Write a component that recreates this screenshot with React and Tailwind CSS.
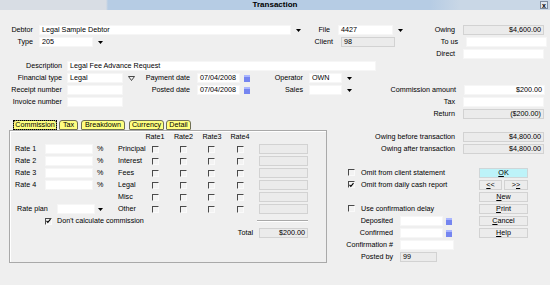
import React from "react";

const Field = ({ w, gray, right, children }) => (
  <div
    className={`${w} h-[10px] shrink-0 flex items-center px-[2px] border leading-none overflow-hidden whitespace-nowrap ${
      gray ? "bg-[#ebebeb] border-[#d2d2d2]" : "bg-white border-[#f6f6f6]"
    } ${right ? "justify-end" : ""}`}
  >
    {children}
  </div>
);

const Label = ({ w, pr = "", pl = "", left, children }) => (
  <div className={`${w} ${pr} ${pl} shrink-0 leading-none whitespace-nowrap ${left ? "text-left" : "text-right"}`}>
    {children}
  </div>
);

const Arrow = ({ ml = "ml-[3px]", hollow }) => (
  <div className={`${ml} w-[8px] h-[10px] shrink-0 flex items-center justify-center`}>
    {hollow ? (
      <svg width="7" height="5" viewBox="0 0 7 5">
        <path d="M0.5 0.5H6.5L3.5 4.5Z" fill="none" stroke="#333" strokeWidth="0.9" />
      </svg>
    ) : (
      <svg width="5" height="3" viewBox="0 0 5 3">
        <path d="M0 0H5L2.5 3Z" fill="#000" />
      </svg>
    )}
  </div>
);

const Check = ({ checked }) => (
  <div className="w-[7px] h-[7px] shrink-0 border-t border-l border-r border-b border-t-[#4a4a4a] border-l-[#4a4a4a] border-r-[#fafafa] border-b-[#fafafa] bg-[#f3f3f3] flex items-center justify-center">
    {checked && (
      <svg width="6" height="6" viewBox="0 0 6 6">
        <path d="M0.6 2.8L2.2 4.6L5.4 0.8" fill="none" stroke="#000" strokeWidth="1.3" />
      </svg>
    )}
  </div>
);

const Cal = ({ ml = "ml-[4px]" }) => (
  <div className={`${ml} w-[6px] h-[7px] shrink-0 bg-[#7585f0] border-t-2 border-[#aab6ff]`} />
);

const Btn = ({ w = "w-[49px]", cyan, children }) => (
  <div
    className={`${w} h-[10px] shrink-0 flex items-center justify-center border leading-none ${
      cyan ? "bg-[#bdf3f9] border-[#cfd6d8]" : "bg-[#ececec] border-[#d2d2d2]"
    }`}
  >
    {children}
  </div>
);

const Row = ({ children }) => <div className="h-[12px] flex items-center">{children}</div>;

const Tab = ({ w, ml, active, children }) => (
  <div
    className={`${w} ${ml} h-[10px] shrink-0 flex items-center justify-center bg-[#ffff80] border border-[#6f6f55] rounded-t-[3px] rounded-b-[1px] leading-none`}
  >
    <span className={active ? "outline outline-1 outline-dotted outline-black px-[1px]" : ""}>{children}</span>
  </div>
);

export default function App() {
  return (
    <div className="w-[550px] h-[285px] bg-[#efefef] text-black text-[7.2px] font-['Liberation_Sans',Arial,sans-serif] overflow-hidden flex flex-col">
      {/* Title bar */}
      <div className="h-[10px] shrink-0 flex items-center relative bg-[linear-gradient(to_right,#d8dde4_0px,#d8dde4_106px,#b6cce4_108px,#b6cce4_430px,#c9d7e6_460px,#c9d7e6_550px)]">
        <div className="flex-1 text-center font-bold text-[8px] leading-none">Transaction</div>
        <div className="absolute right-[2px] top-[1px] w-[8px] h-[8px] border border-[#7d8ca0] bg-[#dfe6ee] flex items-center justify-center text-[7px] font-bold leading-none">
          x
        </div>
      </div>

      {/* Top form */}
      <div className="mt-[14px] flex flex-col">
        <Row>
          <Label w="w-[39px]" pr="pr-[6px]">Debtor</Label>
          <Field w="w-[252px]">Legal Sample Debtor</Field>
          <Arrow />
          <Label w="w-[36px]" pr="pr-[8px]">File</Label>
          <Field w="w-[55px]">4427</Field>
          <Arrow />
          <Label w="w-[59px]" pr="pr-[8px]">Owing</Label>
          <Field w="w-[81px]" gray right>$4,600.00</Field>
        </Row>
        <Row>
          <Label w="w-[39px]" pr="pr-[6px]">Type</Label>
          <Field w="w-[54px]">205</Field>
          <Arrow />
          <Label w="w-[237px]" pr="pr-[8px]">Client</Label>
          <Field w="w-[54px]" gray>98</Field>
          <Label w="w-[71px]" pr="pr-[8px]">To us</Label>
          <Field w="w-[81px]" />
        </Row>
        <Row>
          <Label w="w-[463px]" pr="pr-[8px]">Direct</Label>
          <Field w="w-[81px]" />
        </Row>
        <Row>
          <Label w="w-[67px]" pr="pr-[5px]">Description</Label>
          <Field w="w-[309px]">Legal Fee Advance Request</Field>
        </Row>
        <Row>
          <Label w="w-[67px]" pr="pr-[5px]">Financial type</Label>
          <Field w="w-[56px]">Legal</Field>
          <Arrow ml="ml-[4px]" hollow />
          <Label w="w-[62px]" pr="pr-[7px]">Payment date</Label>
          <Field w="w-[43px]">07/04/2008</Field>
          <Cal />
          <Label w="w-[59px]" pr="pr-[6px]">Operator</Label>
          <Field w="w-[33px]">OWN</Field>
          <Arrow />
        </Row>
        <Row>
          <Label w="w-[67px]" pr="pr-[5px]">Receipt number</Label>
          <Field w="w-[56px]" />
          <Label w="w-[74px]" pr="pr-[7px]">Posted date</Label>
          <Field w="w-[43px]">07/04/2008</Field>
          <Cal />
          <Label w="w-[59px]" pr="pr-[6px]">Sales</Label>
          <Field w="w-[33px]" />
          <Arrow />
          <Label w="w-[111px]" pr="pr-[8px]">Commission amount</Label>
          <Field w="w-[81px]" right>$200.00</Field>
        </Row>
        <Row>
          <Label w="w-[67px]" pr="pr-[5px]">Invoice number</Label>
          <Field w="w-[56px]" />
          <Label w="w-[340px]" pr="pr-[8px]">Tax</Label>
          <Field w="w-[81px]" />
        </Row>
        <Row>
          <Label w="w-[463px]" pr="pr-[8px]">Return</Label>
          <Field w="w-[81px]" gray right>($200.00)</Field>
        </Row>
      </div>

      {/* Lower section */}
      <div className="flex">
        {/* Left tabbed panel */}
        <div className="ml-[9px] w-[318px] shrink-0 flex flex-col">
          <div className="h-[10px] flex pl-[4px]">
            <Tab w="w-[44px]" ml="ml-0" active>Commission</Tab>
            <Tab w="w-[19px]" ml="ml-[2px]">Tax</Tab>
            <Tab w="w-[44px]" ml="ml-[3px]">Breakdown</Tab>
            <Tab w="w-[35px]" ml="ml-[4px]">Currency</Tab>
            <Tab w="w-[25px]" ml="ml-[2px]">Detail</Tab>
          </div>
          <div className="h-[133px] border border-[#a9a9a9] shadow-[inset_1px_1px_0_#ffffff] flex flex-col">
            <Row>
              <div className="w-[131px] shrink-0" />
              <div className="w-[28px] shrink-0 text-center leading-none">Rate1</div>
              <div className="w-[29px] shrink-0 text-center leading-none">Rate2</div>
              <div className="w-[28px] shrink-0 text-center leading-none">Rate3</div>
              <div className="w-[28px] shrink-0 text-center leading-none">Rate4</div>
            </Row>
            {[
              ["Rate 1", "Principal"],
              ["Rate 2", "Interest"],
              ["Rate 3", "Fees"],
              ["Rate 4", "Legal"],
              [null, "Misc"],
              ["plan", "Other"],
            ].map(([rate, name]) => (
              <Row key={name}>
                {rate === "plan" ? (
                  <>
                    <Label w="w-[47px]" pl="pl-[7px]" left>Rate plan</Label>
                    <Field w="w-[38px]" />
                    <Arrow ml="ml-[1px]" />
                    <div className="w-[14px] shrink-0" />
                  </>
                ) : rate ? (
                  <>
                    <Label w="w-[35px]" pl="pl-[5px]" left>{rate}</Label>
                    <Field w="w-[48px]" />
                    <Label w="w-[25px]" pl="pl-[4px]" left>%</Label>
                  </>
                ) : (
                  <div className="w-[108px] shrink-0" />
                )}
                <Label w="w-[34px]" left>{name}</Label>
                <div className="w-[28px] shrink-0"><Check /></div>
                <div className="w-[28px] shrink-0"><Check /></div>
                <div className="w-[29px] shrink-0"><Check /></div>
                <div className="w-[22px] shrink-0"><Check /></div>
                <Field w="w-[49px]" gray />
              </Row>
            ))}
            <Row>
              <div className="w-[35px] shrink-0" />
              <Check checked />
              <div className="w-[205px] shrink-0 pl-[5px] leading-none whitespace-nowrap">Don't calculate commission</div>
              <div className="w-[51px] h-[2px] shrink-0 border-t border-b border-t-[#a9a9a9] border-b-white" />
            </Row>
            <Row>
              <Label w="w-[249px]" pr="pr-[6px]">Total</Label>
              <Field w="w-[49px]" gray right>$200.00</Field>
            </Row>
          </div>
        </div>

        {/* Right column */}
        <div className="w-[223px] shrink-0 pt-[11px] flex flex-col">
          <Row>
            <Label w="w-[136px]" pr="pr-[8px]">Owing before transaction</Label>
            <Field w="w-[81px]" gray right>$4,800.00</Field>
          </Row>
          <Row>
            <Label w="w-[136px]" pr="pr-[8px]">Owing after transaction</Label>
            <Field w="w-[81px]" gray right>$4,800.00</Field>
          </Row>
          <Row />
          <Row>
            <div className="w-[152px] shrink-0 pl-[21px] flex items-center">
              <Check />
              <span className="ml-[6px] leading-none whitespace-nowrap">Omit from client statement</span>
            </div>
            <Btn cyan><span className="underline">O</span>K</Btn>
          </Row>
          <Row>
            <div className="w-[152px] shrink-0 pl-[21px] flex items-center">
              <Check checked />
              <span className="ml-[6px] leading-none whitespace-nowrap">Omit from daily cash report</span>
            </div>
            <div className="flex gap-[2px]">
              <Btn w="w-[23px]"><span className="underline">&lt;</span>&lt;</Btn>
              <Btn w="w-[24px]">&gt;<span className="underline">&gt;</span></Btn>
            </div>
          </Row>
          <Row>
            <div className="w-[152px] shrink-0" />
            <Btn><span className="underline">N</span>ew</Btn>
          </Row>
          <Row>
            <div className="w-[152px] shrink-0 pl-[21px] flex items-center">
              <Check />
              <span className="ml-[6px] leading-none whitespace-nowrap">Use confirmation delay</span>
            </div>
            <Btn><span className="underline">P</span>rint</Btn>
          </Row>
          <Row>
            <div className="w-[152px] shrink-0 flex items-center">
              <Label w="w-[73px]" pr="pr-[7px]">Deposited</Label>
              <Field w="w-[43px]" />
              <Cal ml="ml-[3px]" />
            </div>
            <Btn><span className="underline">C</span>ancel</Btn>
          </Row>
          <Row>
            <div className="w-[152px] shrink-0 flex items-center">
              <Label w="w-[73px]" pr="pr-[7px]">Confirmed</Label>
              <Field w="w-[43px]" />
              <Cal ml="ml-[3px]" />
            </div>
            <Btn><span className="underline">H</span>elp</Btn>
          </Row>
          <Row>
            <Label w="w-[73px]" pr="pr-[7px]">Confirmation #</Label>
            <Field w="w-[54px]" />
          </Row>
          <Row>
            <Label w="w-[73px]" pr="pr-[7px]">Posted by</Label>
            <Field w="w-[37px]" gray>99</Field>
          </Row>
        </div>
      </div>
    </div>
  );
}
